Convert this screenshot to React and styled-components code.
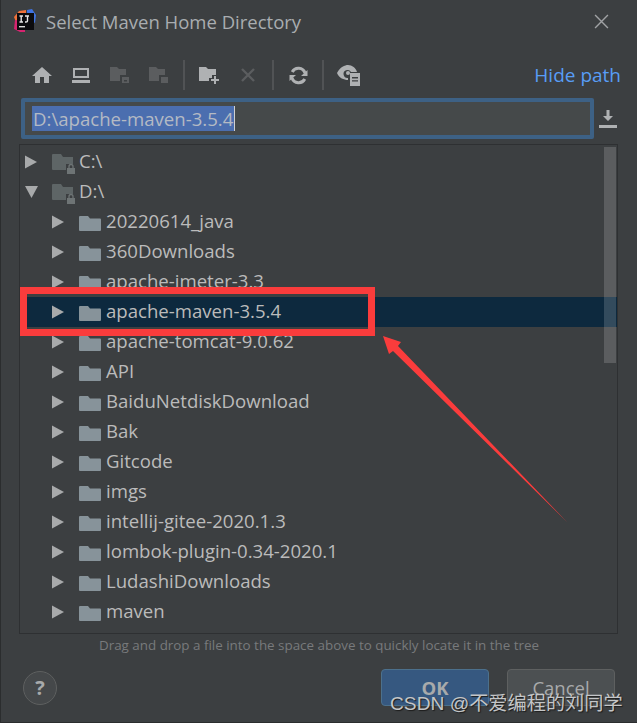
import React from 'react';
import styled, { createGlobalStyle } from 'styled-components';

const rows = [
  { name: 'C:\\', depth: 0, root: true },
  { name: 'D:\\', depth: 0, root: true, open: true },
  { name: '20220614_java', depth: 1 },
  { name: '360Downloads', depth: 1 },
  { name: 'apache-jmeter-3.3', depth: 1 },
  { name: 'apache-maven-3.5.4', depth: 1, selected: true },
  { name: 'apache-tomcat-9.0.62', depth: 1 },
  { name: 'API', depth: 1 },
  { name: 'BaiduNetdiskDownload', depth: 1 },
  { name: 'Bak', depth: 1 },
  { name: 'Gitcode', depth: 1 },
  { name: 'imgs', depth: 1 },
  { name: 'intellij-gitee-2020.1.3', depth: 1 },
  { name: 'lombok-plugin-0.34-2020.1', depth: 1 },
  { name: 'LudashiDownloads', depth: 1 },
  { name: 'maven', depth: 1 },
];

const Logo = () => (
  <svg width="24" height="24" viewBox="0 0 24 24">
    <path d="M1 8 L6 2 L13 1 L13 12 L3 13 Z" fill="#f0713a" />
    <path d="M2 11 L1 20 L7 23 L12 23 L12 12 Z" fill="#d6246f" />
    <path d="M14 1 L19 0 L23 6 L22 14 L14 10 Z" fill="#3f73e0" />
    <rect x="4" y="4" width="17" height="17" fill="#0b0b0e" />
    <rect x="6" y="17" width="6" height="1.4" fill="#dcdcdc" />
    <path d="M6.5 7 H10 M8.2 7 V13 M6.5 13 H10 M12 7 H16 M14.5 7 V12 Q14.5 13 13 13 H12" stroke="#e6e6e6" strokeWidth="1.4" fill="none" />
  </svg>
);

const HomeIcon = () => (
  <svg width="20" height="18" viewBox="0 0 20 18">
    <path d="M10 1 L20 10 H17 V17 H12 V11 H8 V17 H3 V10 H0 Z" fill="currentColor" />
  </svg>
);

const DesktopIcon = () => (
  <svg width="18" height="16" viewBox="0 0 18 16">
    <path d="M1 1 H17 V11 H1 Z M3 3 V9 H15 V3 Z" fill="currentColor" fillRule="evenodd" />
    <rect x="0" y="13" width="18" height="3" fill="currentColor" />
  </svg>
);

const FolderBadgeIcon = ({ filled }) => (
  <svg width="20" height="18" viewBox="0 0 20 18">
    <path d="M0 1 H7 L9 3 H16 V9 H10 V15 H0 Z" fill="currentColor" />
    {filled ? (
      <rect x="12" y="11" width="7" height="6" fill="currentColor" />
    ) : (
      <path d="M12 11 H19 V17 H12 Z M14 14 V15.5 H17 V14 Z" fill="currentColor" fillRule="evenodd" />
    )}
  </svg>
);

const NewFolderIcon = () => (
  <svg width="21" height="18" viewBox="0 0 21 18">
    <path d="M0 1 H7 L9 3 H17 V9 H13 V12 H10 V15 H0 Z" fill="currentColor" />
    <path d="M15 10 H17 V13 H20 V15 H17 V18 H15 V15 H12 V13 H15 Z" fill="currentColor" />
  </svg>
);

const CrossIcon = ({ size = 14, weight = 2.4 }) => (
  <svg width={size} height={size} viewBox="0 0 14 14">
    <path d="M1 1 L13 13 M13 1 L1 13" stroke="currentColor" strokeWidth={weight} fill="none" />
  </svg>
);

const RefreshIcon = () => (
  <svg width="19" height="19" viewBox="0 0 19 19">
    <path d="M16 7 A7 7 0 0 0 3.2 6 M3 12 A7 7 0 0 0 15.8 13" stroke="currentColor" strokeWidth="3" fill="none" />
    <path d="M18.5 4 V10 H12 Z M0.5 15 V9 H7 Z" fill="currentColor" />
  </svg>
);

const EyeIcon = () => (
  <svg width="23" height="22" viewBox="0 0 23 22">
    <path d="M0 9 C3 3 8 1 11 1 C15 1 19 4 20 8 H14 A4 4 0 1 0 11 14 V16 C7 16 2 14 0 9 Z" fill="currentColor" />
    <circle cx="11" cy="9" r="2" fill="currentColor" />
    <path d="M13 9 H23 V22 H13 Z M15 13 V14.4 H21 V13 Z M15 16.2 V17.6 H21 V16.2 Z" fill="currentColor" fillRule="evenodd" />
  </svg>
);

const DownloadIcon = () => (
  <svg width="18" height="18" viewBox="0 0 18 18">
    <path d="M7.5 0 H10.5 V6 H14 L9 11 L4 6 H7.5 Z" fill="currentColor" />
    <rect x="0" y="15" width="18" height="3" fill="currentColor" />
  </svg>
);

const FolderIcon = ({ root }) => (
  <FolderSvg $root={root} viewBox={root ? '0 0 23 20' : '0 0 23 15'}>
    {root ? (
      <>
        <path d="M0 1 Q0 0 1 0 H9 L11 3 H21 V16 H1 Q0 16 0 15 Z" fill="#5e6566" />
        <rect x="14" y="10" width="9" height="10" fill="#3c3f41" />
        <rect x="15" y="14" width="8" height="6" fill="#6e7475" />
        <path d="M17 14 V12.5 A2 2 0 0 1 21 12.5 V14" stroke="#6e7475" strokeWidth="1.3" fill="none" />
      </>
    ) : (
      <path d="M0 1 Q0 0 1 0 H9 L11 2.5 H21 Q22 2.5 22 3.5 V14 Q22 15 21 15 H1 Q0 15 0 14 Z" fill="#87939a" />
    )}
  </FolderSvg>
);

const Chevron = ({ open }) => (
  <ChevronSvg viewBox="0 0 14 14">
    <path d={open ? 'M1 1 H14 L7.5 13 Z' : 'M1 0.5 L13 7 L1 13.5 Z'} fill="#a8aaab" />
  </ChevronSvg>
);

const ArrowMark = () => (
  <ArrowSvg viewBox="0 0 637 723">
    <path d="M383 336 L401 342 L398 346 L567 522 L393 351 L389 354 Z" fill="#fa3c3c" />
  </ArrowSvg>
);

const App = () => (
  <>
    <GlobalStyle />
    <Dialog>
      <TitleBar>
        <Logo />
        <Title>Select Maven Home Directory</Title>
        <CloseButton>
          <CrossIcon size={15} weight={1.3} />
        </CloseButton>
      </TitleBar>

      <Toolbar>
        <ToolButton><HomeIcon /></ToolButton>
        <ToolButton><DesktopIcon /></ToolButton>
        <ToolButton $disabled><FolderBadgeIcon /></ToolButton>
        <ToolButton $disabled><FolderBadgeIcon filled /></ToolButton>
        <Separator />
        <ToolButton><NewFolderIcon /></ToolButton>
        <ToolButton $disabled><CrossIcon /></ToolButton>
        <Separator />
        <ToolButton><RefreshIcon /></ToolButton>
        <Separator />
        <ToolButton><EyeIcon /></ToolButton>
        <HidePath>Hide path</HidePath>
      </Toolbar>

      <PathRow>
        <PathField>
          <Selected>D:\apache-maven-3.5.4</Selected>
        </PathField>
        <DownloadButton><DownloadIcon /></DownloadButton>
      </PathRow>

      <Tree>
        {rows.map(row => (
          <Row key={row.name} $depth={row.depth} $selected={row.selected}>
            <Chevron open={row.open} />
            <FolderIcon root={row.root} />
            <RowName>{row.name}</RowName>
          </Row>
        ))}
        <Scrollbar />
      </Tree>

      <Hint>Drag and drop a file into the space above to quickly locate it in the tree</Hint>

      <Footer>
        <HelpButton>?</HelpButton>
        <FooterButton $primary>OK</FooterButton>
        <FooterButton>Cancel</FooterButton>
      </Footer>

      <RedBox />
      <ArrowMark />
      <Watermark>CSDN @不爱编程的刘同学</Watermark>
    </Dialog>
  </>
);

const GlobalStyle = createGlobalStyle`
  html, body {
    margin: 0;
    padding: 0;
    background: #3c3f41;
  }
  * {
    box-sizing: border-box;
  }
`;

const Dialog = styled.div`
  position: relative;
  width: 637px;
  height: 723px;
  overflow: hidden;
  display: flex;
  flex-direction: column;
  background: #3c3f41;
  border-left: 1px solid #2b2d2e;
  border-bottom: 1px solid #2b2d2e;
  color: #bbbbbb;
  font-family: "Open Sans", "Noto Sans", sans-serif;
`;

const TitleBar = styled.div`
  display: flex;
  align-items: center;
  height: 42px;
  padding: 0 28px 0 12px;
`;

const Title = styled.div`
  margin-left: 9px;
  font-size: 18.5px;
  color: #a9adb0;
`;

const CloseButton = styled.div`
  display: flex;
  margin-left: auto;
  color: #a0a2a4;
`;

const Toolbar = styled.div`
  display: flex;
  align-items: center;
  height: 32px;
  margin-top: 17px;
  padding: 0 16px 0 21.5px;
`;

const ToolButton = styled.div`
  display: flex;
  align-items: center;
  justify-content: center;
  width: 39px;
  height: 30px;
  color: ${p => (p.$disabled ? '#5b5d5f' : '#afb1b3')};
`;

const Separator = styled.div`
  width: 2px;
  height: 30px;
  margin: 0 4.5px;
  background: #515355;
`;

const HidePath = styled.a`
  margin-left: auto;
  font-size: 19px;
  color: #589df6;
`;

const PathRow = styled.div`
  display: flex;
  align-items: center;
  margin-top: 7px;
  padding-left: 20px;
`;

const PathField = styled.div`
  display: flex;
  align-items: center;
  width: 573px;
  height: 41px;
  padding-left: 7px;
  background: #45494a;
  border: 4px solid #3d6185;
  border-radius: 2px;
  font-size: 18.6px;
`;

const Selected = styled.span`
  display: block;
  height: 25px;
  line-height: 25px;
  padding: 0 1px;
  background: #4b6eaf;
  border-right: 1px solid #d0d0d0;
  color: #b4bac4;
`;

const DownloadButton = styled.div`
  display: flex;
  margin-left: 5px;
  color: #afb1b3;
`;

const Tree = styled.div`
  position: relative;
  width: 599px;
  height: 490px;
  margin: 5px 0 0 18px;
  padding-top: 2px;
  overflow: hidden;
  border: 1px solid #2e3032;
`;

const Row = styled.div`
  display: flex;
  align-items: center;
  height: 30px;
  padding-left: ${p => 4 + p.$depth * 27}px;
  background: ${p => (p.$selected ? '#0d293e' : 'transparent')};
`;

const ChevronSvg = styled.svg`
  width: 14px;
  height: 14px;
  margin-right: 14px;
`;

const FolderSvg = styled.svg`
  width: 23px;
  height: ${p => (p.$root ? 20 : 15)}px;
  margin-top: ${p => (p.$root ? 4 : 2)}px;
`;

const RowName = styled.span`
  margin-left: 4px;
  margin-top: -4px;
  font-size: 18.6px;
  white-space: nowrap;
`;

const Scrollbar = styled.div`
  position: absolute;
  top: 2px;
  right: 1px;
  width: 12px;
  height: 216px;
  background: rgba(255, 255, 255, 0.16);
`;

const Hint = styled.div`
  margin-top: 2px;
  text-align: center;
  font-size: 13.4px;
  color: #787a7c;
`;

const Footer = styled.div`
  display: flex;
  align-items: center;
  gap: 18px;
  margin-top: 15px;
  padding: 0 22px;
`;

const HelpButton = styled.div`
  display: flex;
  align-items: center;
  justify-content: center;
  width: 34px;
  height: 34px;
  margin-right: auto;
  border: 1px solid #5e6060;
  border-radius: 50%;
  background: #45484a;
  font-size: 20px;
  font-weight: 700;
  color: #a8aaab;
`;

const FooterButton = styled.div`
  display: flex;
  align-items: center;
  justify-content: center;
  width: 108px;
  height: 37px;
  border: 1px solid ${p => (p.$primary ? '#4c708c' : '#5e6060')};
  border-radius: 4px;
  background: ${p => (p.$primary ? '#365880' : '#4c5052')};
  font-size: 18.5px;
  font-weight: ${p => (p.$primary ? 700 : 400)};
  color: #a8aaab;
`;

const RedBox = styled.div`
  position: absolute;
  left: 19px;
  top: 287px;
  width: 355px;
  height: 49px;
  border: 7px solid #fa3c3c;
`;

const ArrowSvg = styled.svg`
  position: absolute;
  left: -1px;
  top: 0;
  width: 637px;
  height: 723px;
  pointer-events: none;
`;

const Watermark = styled.div`
  position: absolute;
  left: 389px;
  top: 688px;
  font-family: "Liberation Sans", "Noto Sans CJK SC", sans-serif;
  font-size: 19.2px;
  white-space: nowrap;
  color: #c4c6c8;
  text-shadow: 1px 1px 1px #1c1c1c;
`;

export default App;
